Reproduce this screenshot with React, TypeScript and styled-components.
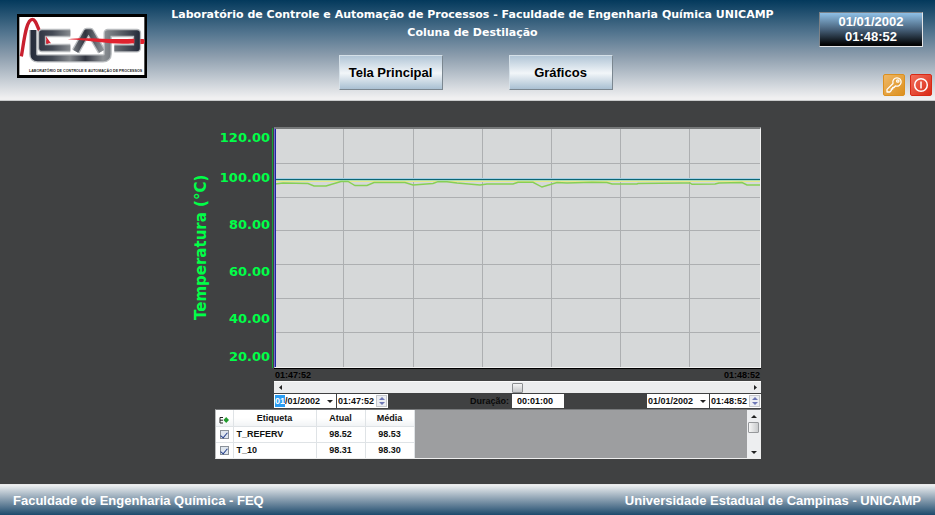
import React, { useState } from "react";
import styled, { createGlobalStyle } from "styled-components";

const GlobalStyle = createGlobalStyle`
  * { box-sizing: border-box; }
  body { margin: 0; background: #404142; font-family: "Liberation Sans", Arial, sans-serif; }
  button, input { font: inherit; color: inherit; margin: 0; padding: 0; border: 0; border-radius: 0; }
`;

const Page = styled.div`
  min-height: 100vh;
  display: flex;
  flex-direction: column;
  font-size: 9px;
  font-weight: 700;
  color: #111;
`;

/* ---------- header ---------- */

const Header = styled.header`
  display: grid;
  grid-template-columns: 146px 1fr 130px;
  height: 101px;
  background: linear-gradient(#03395c, #53758f 33%, #8c9dad 56%, #f0f0f1 98%);
  border-bottom: 1px solid #c9cacb;
`;

const Logo = styled.svg`
  width: 130px;
  height: 64px;
  margin: 14px 0 0 17px;
`;

const Heading = styled.div`
  display: flex;
  flex-direction: column;
  align-items: center;
  padding-top: 6px;
`;

const Title = styled.h1`
  margin: 0;
  padding-right: 6px;
  font: 700 11px/18px "DejaVu Sans", sans-serif;
  color: #fff;
  text-align: center;
  white-space: nowrap;
`;

const Nav = styled.nav`
  display: flex;
  gap: 66px;
  margin-top: 13px;
`;

const NavButton = styled.button`
  width: 104px;
  height: 35px;
  border: 1px solid;
  border-color: #d5e0e8 #7b8790 #7b8790 #d5e0e8;
  outline: 0;
  background: linear-gradient(#b1c5d6, #f2f6f9 52%, #a9c0d2);
  font-size: 13px;
  font-weight: 700;
  color: #000;
  white-space: nowrap;
`;

const Side = styled.div`
  display: flex;
  flex-direction: column;
  align-items: flex-end;
  justify-content: space-between;
  padding: 12px 3px 4px 0;
`;

const Clock = styled.time`
  width: 104px;
  height: 35px;
  margin-right: 9px;
  padding-top: 1px;
  border: 1px solid;
  border-color: #7b8288 #e4e6e8 #e4e6e8 #7b8288;
  background: linear-gradient(#8fc0e6, #47617a 50%, #030405 95%);
  color: #fff;
  font-size: 13px;
  line-height: 15px;
  text-align: center;
`;

const Actions = styled.div`
  display: flex;
  gap: 5px;
`;

const IconButton = styled.button<{ $from: string; $to: string }>`
  width: 22px;
  height: 22px;
  padding: 1px;
  border: 1px solid ${(p) => p.$to};
  border-radius: 2px;
  background: linear-gradient(135deg, ${(p) => p.$from}, ${(p) => p.$to});
  svg { display: block; width: 18px; height: 18px; }
`;

/* ---------- chart ---------- */

const Main = styled.main`
  flex: 1;
  padding: 26px 174px 24px 192px;
`;

const Chart = styled.section`
  display: grid;
  grid-template-columns: 18px 60px 4px 1fr;
`;

const AxisTitle = styled.h2`
  margin: 0;
  writing-mode: vertical-rl;
  transform: rotate(180deg);
  text-align: center;
  font: 700 15px/18px "DejaVu Sans", sans-serif;
  color: #00ff48;
  white-space: nowrap;
`;

const Ticks = styled.div`
  display: grid;
  grid-template-rows: 27px repeat(4, 47px) 26px;
  align-items: center;
  justify-items: end;
  font: 700 13px/22px "DejaVu Sans", sans-serif;
  color: #00ff48;
  span:first-child { align-self: start; }
  span:last-child { align-self: end; }
`;

const AxisLine = styled.div`
  margin: 1px 1px 0 2px;
  background: #12a334;
`;

const Plot = styled.div`
  height: 241px;
  border: 1px solid;
  border-top: 2px solid #77797a;
  border-color: #77797a #f1f1f1 #f1f1f1 #6f70c8;
  background: #d6d8d9;
  svg { display: block; width: 100%; height: 100%; }
`;

const Under = styled.div`
  margin-left: 82px;
`;

const Range = styled.div`
  display: flex;
  justify-content: space-between;
  padding: 0 1px;
  border-top: 1px solid #000;
  line-height: 12px;
  color: #000;
`;

const ScrollBar = styled.div`
  display: flex;
  height: 12px;
  background: #ecedee;
  border-top: 1px solid #fafafa;
`;

const ArrowButton = styled.button<{ $w: number; $h: number }>`
  flex: none;
  display: grid;
  place-items: center;
  width: ${(p) => p.$w}px;
  height: ${(p) => p.$h}px;
  background: transparent;
  color: #222;
  svg { display: block; }
`;

const Slider = styled.input`
  flex: 1;
  min-width: 0;
  height: 11px;
  appearance: none;
  background: transparent;
  &::-webkit-slider-thumb {
    appearance: none;
    width: 11px;
    height: 10px;
    border: 1px solid #8d8f91;
    border-radius: 1px;
    background: linear-gradient(#f5f5f5, #c6c8ca);
  }
`;

const Controls = styled.div`
  display: flex;
  align-items: flex-start;
  justify-content: space-between;
  height: 15px;
  margin-top: 1px;
`;

const Group = styled.div`
  display: flex;
  align-items: center;
  gap: 1px;
`;

const Field = styled.div<{ $w: number }>`
  display: flex;
  align-items: center;
  width: ${(p) => p.$w}px;
  height: 14px;
  padding-left: 1px;
  background: #fff;
`;

const Text = styled.input<{ $w?: number; $selected?: boolean }>`
  ${(p) => (p.$w ? `width: ${p.$w}px;` : "flex: 1; min-width: 0;")}
  height: 12px;
  outline: 0;
  background: ${(p) => (p.$selected ? "#2a9df4" : "transparent")};
  color: ${(p) => (p.$selected ? "#fff" : "#111")};
`;

const Spinner = styled.div`
  display: flex;
  flex-direction: column;
  width: 11px;
  margin-right: 1px;
  border: 1px solid #c5c7cb;
  background: #eceef2;
`;

const Duration = styled.label`
  display: flex;
  align-items: center;
  gap: 3px;
  margin-right: auto;
  margin-left: 82px;
  color: #0a0a0a;
`;

const DurationInput = styled.input`
  width: 52px;
  height: 14px;
  padding-left: 5px;
  background: #fff;
`;

/* ---------- tag list ---------- */

const TagPanel = styled.div`
  display: flex;
  height: 50px;
  margin-left: 23px;
  border: 1px solid;
  border-color: #77797b #eeeeee #eeeeee #b8babb;
  background: #9d9ea0;
`;

const TagTable = styled.table`
  border-collapse: collapse;
  table-layout: fixed;
  width: 198px;
  background: #fff;
  th, td {
    height: 16px;
    padding: 0;
    border-right: 1px solid #dfe3e6;
    border-bottom: 1px solid #dfe3e6;
    line-height: 14px;
    text-align: center;
  }
  th { background: linear-gradient(#fff 50%, #f1f3f5); font-weight: 700; }
  th svg { display: block; margin: 4px auto 0; }
  tr:last-child td { border-bottom: 0; }
  td:nth-child(2) { padding-left: 3px; text-align: left; }
`;

const Check = styled.input`
  display: grid;
  place-items: center;
  width: 9px;
  height: 9px;
  margin: 0 auto;
  appearance: none;
  border: 1px solid #8a9199;
  background: #dfe6ee;
  &:checked::after {
    content: "";
    width: 3px;
    height: 6px;
    margin-bottom: 1px;
    border: solid #27418c;
    border-width: 0 1px 1px 0;
    transform: rotate(40deg);
  }
`;

const VScroll = styled.div`
  display: flex;
  flex-direction: column;
  width: 13px;
  margin-left: auto;
  background: #edeef0;
`;

const Thumb = styled.div`
  width: 11px;
  height: 11px;
  margin: 0 1px auto;
  border: 1px solid #96989b;
  border-radius: 1px;
  background: linear-gradient(90deg, #f6f6f6, #c9cbcd);
`;

/* ---------- footer ---------- */

const Footer = styled.footer`
  display: flex;
  justify-content: space-between;
  height: 31px;
  padding: 0 14px 0 13px;
  border-top: 1px solid #e9eaeb;
  background: linear-gradient(#eef0f1, #8fa3b4 45%, #1d4a6c);
  color: #fff;
  font-size: 13px;
  line-height: 31px;
  white-space: nowrap;
`;

const shapes = {
  left: "M3 0 L0 2.5 L3 5 Z",
  right: "M0 0 L3 2.5 L0 5 Z",
  up: "M0 3 L3 0 L6 3 Z",
  down: "M0 0 L6 0 L3 3 Z",
};

const Arrow = ({ dir, color = "#222" }: { dir: keyof typeof shapes; color?: string }) => {
  const tall = dir === "left" || dir === "right";
  return (
    <svg width={tall ? 3 : 6} height={tall ? 5 : 3} aria-hidden="true">
      <path d={shapes[dir]} fill={color} />
    </svg>
  );
};

const letters = [
  "M69 66 V138 Q69 151 82 151 H278 Q292 151 292 138 V75 H380 V121 H312",
  "M180 75 H95 V120 H180",
  "M196 130 L229 72 H240 L274 130",
];

const LcapLogo = () => (
  <Logo viewBox="20 18 390 192" preserveAspectRatio="none" role="img" aria-label="LCAP">
    <defs>
      <linearGradient id="metal" gradientUnits="userSpaceOnUse" x1="60" y1="0" x2="390" y2="0">
        <stop offset="0" stopColor="#252b3a" />
        <stop offset="0.2" stopColor="#444a55" />
        <stop offset="0.36" stopColor="#85898e" />
        <stop offset="0.5" stopColor="#30343f" />
        <stop offset="0.66" stopColor="#8d9195" />
        <stop offset="0.82" stopColor="#5b6068" />
        <stop offset="1" stopColor="#232938" />
      </linearGradient>
    </defs>
    <rect x="20" y="18" width="390" height="192" fill="#000" />
    <rect x="27" y="27" width="375" height="174" fill="#fff" />
    <path d="M33 145 C40 110 46 34 66 34 C82 34 84 86 113 108" fill="none" stroke="#c9202f" strokeWidth="10" />
    {letters.map((d) => (
      <path key={d} d={d} fill="none" stroke="#b9bcbf" strokeWidth="25" strokeLinejoin="round" />
    ))}
    {letters.map((d) => (
      <path key={d} d={d} fill="none" stroke="url(#metal)" strokeWidth="17" strokeLinejoin="round" />
    ))}
    <path d="M106 84 L122 106 L110 106 Z" fill="#d22535" />
    <path d="M172 94 C225 86 300 97 372 92 V106 C300 112 260 98 172 94 Z" fill="#e0232f" />
    <path d="M390 93 H400 L403 100 L400 108 H390 Z" fill="#e0232f" />
    <text x="56" y="192" fontSize="11" fontWeight="700" fill="#222">
      LABORATÓRIO DE CONTROLE E AUTOMAÇÃO DE PROCESSOS
    </text>
  </Logo>
);

const measured: [number, number][] = [
  [275, 184], [283, 183], [308, 183.5], [314, 186], [326, 186], [341, 181.5], [348, 181.5], [355, 185.5],
  [367, 185.5], [374, 182.5], [405, 182.5], [413, 185], [433, 183.5], [438, 181.7], [447, 181.7], [457, 183],
  [480, 185], [487, 184], [513, 184], [518, 182.3], [533, 182.3], [542, 187], [557, 182.5], [567, 183],
  [592, 182.3], [607, 182.5], [612, 184], [637, 184], [638, 183.5], [682, 183], [690, 183], [692, 184.3],
  [715, 184], [719, 183], [742, 182.5], [747, 185], [760, 185],
];

const line = measured.map(([x, y]) => `${x},${y}`).join(" ");
const steps = [1, 2, 3, 4, 5, 6];

const Trend = () => (
  <svg viewBox="275 129 485 238" preserveAspectRatio="none" role="img" aria-label="Temperatura (°C)">
    {steps.map((i) => (
      <g key={i} fill="#adafb1">
        <rect x={Math.round(274.2 + i * 69.2)} y="129" width="1" height="238" />
        <rect x="275" y={Math.round(129 + i * 33.8)} width="485" height="1" />
      </g>
    ))}
    <rect x="275" y="178" width="485" height="1" fill="#a5cfe4" />
    <rect x="275" y="179" width="485" height="1" fill="#0d6674" />
    <rect x="275" y="180" width="485" height="1" fill="#a9dcb4" />
    <rect x="275" y="181" width="485" height="1" fill="#eae78c" />
    <polyline points={line} fill="none" stroke="#86cf55" strokeWidth="1.4" />
    <rect x="275" y="129" width="1" height="238" fill="#2222a0" />
  </svg>
);

const TimeField = ({ label, value }: { label: string; value: string }) => (
  <Field $w={51}>
    <Text aria-label={label} defaultValue={value} />
    <Spinner>
      <ArrowButton $w={9} $h={5} aria-label="Aumentar"><Arrow dir="up" color="#6d77b5" /></ArrowButton>
      <ArrowButton $w={9} $h={5} aria-label="Diminuir"><Arrow dir="down" color="#6d77b5" /></ArrowButton>
    </Spinner>
  </Field>
);

const tags = [
  { name: "T_REFERV", now: "98.52", mean: "98.53" },
  { name: "T_10", now: "98.31", mean: "98.30" },
];

export default function App() {
  const [position, setPosition] = useState(50);
  return (
    <Page>
      <GlobalStyle />
      <Header>
        <LcapLogo />
        <Heading>
          <Title>
            Laboratório de Controle e Automação de Processos - Faculdade de Engenharia Química UNICAMP
            <br />
            Coluna de Destilação
          </Title>
          <Nav>
            <NavButton>Tela Principal</NavButton>
            <NavButton>Gráficos</NavButton>
          </Nav>
        </Heading>
        <Side>
          <Clock>01/01/2002<br />01:48:52</Clock>
          <Actions>
            <IconButton $from="#efb765" $to="#dc901f" aria-label="Login">
              <svg viewBox="0 0 18 18" fill="none" stroke="#fff" strokeWidth="1.3" strokeLinejoin="round">
                <path d="M8 7.5 C7 4 9.5 1.8 12 1.8 C14.6 1.8 16.3 4 16.1 6.2 C15.9 9 13.3 10.8 10.4 10 L9 11.5 H7.7 V13 H6.3 V14.5 L4.8 16 H2 V13.4 Z" />
                <circle cx="12.8" cy="5" r="1.2" />
              </svg>
            </IconButton>
            <IconButton $from="#f2705c" $to="#d92a16" aria-label="Sair">
              <svg viewBox="0 0 18 18" fill="none" stroke="#fff" strokeWidth="1.5">
                <circle cx="9" cy="9" r="6.3" />
                <path d="M9 5.5 V12.5" />
              </svg>
            </IconButton>
          </Actions>
        </Side>
      </Header>

      <Main>
        <Chart>
          <AxisTitle>Temperatura (°C)</AxisTitle>
          <Ticks>
            {["120.00", "100.00", "80.00", "60.00", "40.00", "20.00"].map((t) => <span key={t}>{t}</span>)}
          </Ticks>
          <AxisLine />
          <Plot><Trend /></Plot>
        </Chart>
        <Under>
          <Range><span>01:47:52</span><span>01:48:52</span></Range>
          <ScrollBar>
            <ArrowButton $w={12} $h={11} aria-label="Anterior"><Arrow dir="left" /></ArrowButton>
            <Slider
              type="range"
              aria-label="Posição"
              value={position}
              onChange={(e) => setPosition(Number(e.target.value))}
            />
            <ArrowButton $w={12} $h={11} aria-label="Próximo"><Arrow dir="right" /></ArrowButton>
          </ScrollBar>
          <Controls>
            <Group>
              <Field $w={62}>
                <Text $w={10} $selected aria-label="Dia inicial" defaultValue="01" />
                <Text aria-label="Mês e ano iniciais" defaultValue="/01/2002" />
                <ArrowButton $w={12} $h={12} aria-label="Abrir calendário"><Arrow dir="down" /></ArrowButton>
              </Field>
              <TimeField label="Hora inicial" value="01:47:52" />
            </Group>
            <Duration>
              Duração:
              <DurationInput defaultValue="00:01:00" />
            </Duration>
            <Group>
              <Field $w={62}>
                <Text aria-label="Data final" defaultValue="01/01/2002" />
                <ArrowButton $w={12} $h={12} aria-label="Abrir calendário"><Arrow dir="down" /></ArrowButton>
              </Field>
              <TimeField label="Hora final" value="01:48:52" />
            </Group>
          </Controls>
        </Under>
        <TagPanel>
          <TagTable>
            <colgroup>
              <col width="17" />
              <col width="83" />
              <col width="49" />
              <col width="49" />
            </colgroup>
            <thead>
              <tr>
                <th aria-label="Visível">
                  <svg width="10" height="8" viewBox="0 0 10 8" aria-hidden="true">
                    <path d="M4 1.5 H1 V7 H4 M1 4.2 H4" fill="none" stroke="#222" />
                    <path d="M7.2 1 L10 4 L7.2 7 L4.5 4 Z" fill="#1f9a2c" />
                  </svg>
                </th>
                <th>Etiqueta</th>
                <th>Atual</th>
                <th>Média</th>
              </tr>
            </thead>
            <tbody>
              {tags.map((t) => (
                <tr key={t.name}>
                  <td><Check type="checkbox" defaultChecked aria-label={t.name} /></td>
                  <td>{t.name}</td>
                  <td>{t.now}</td>
                  <td>{t.mean}</td>
                </tr>
              ))}
            </tbody>
          </TagTable>
          <VScroll>
            <ArrowButton $w={13} $h={12} aria-label="Subir"><Arrow dir="up" /></ArrowButton>
            <Thumb />
            <ArrowButton $w={13} $h={12} aria-label="Descer"><Arrow dir="down" /></ArrowButton>
          </VScroll>
        </TagPanel>
      </Main>

      <Footer>
        <span>Faculdade de Engenharia Química - FEQ</span>
        <span>Universidade Estadual de Campinas - UNICAMP</span>
      </Footer>
    </Page>
  );
}
